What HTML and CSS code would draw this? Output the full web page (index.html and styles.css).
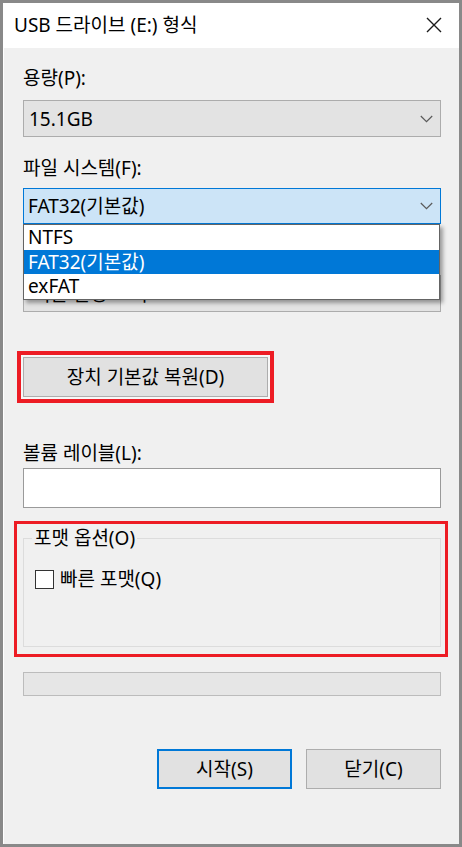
FILE: index.html
```html
<!DOCTYPE html>
<html lang="ko">
<head>
<meta charset="utf-8">
<title>USB 드라이브 (E:) 형식</title>
<link rel="stylesheet" href="styles.css">
</head>
<body>
<div class="window">
  <div class="titlebar">
    <span class="title">USB 드라이브 (E:) 형식</span>
    <svg class="close" width="16" height="16" viewBox="0 0 16 16"><path d="M1 1 L15 15 M15 1 L1 15" stroke="#1a1a1a" stroke-width="1.4" fill="none"/></svg>
  </div>
  <div class="content">
    <div class="label l1">용량(P):</div>
    <div class="combo">
      <span>15.1GB</span>
      <svg class="chev" width="13" height="8" viewBox="0 0 13 8"><path d="M0.8 1 L6.5 6.7 L12.2 1" stroke="#5a5a5a" stroke-width="1.2" fill="none"/></svg>
    </div>
    <div class="label l2">파일 시스템(F):</div>
    <div class="combo-wrap">
      <div class="combo focused">
        <span>FAT32(기본값)</span>
        <svg class="chev" width="13" height="8" viewBox="0 0 13 8"><path d="M0.8 1 L6.5 6.7 L12.2 1" stroke="#5a5a5a" stroke-width="1.2" fill="none"/></svg>
      </div>
      <ul class="dropdown">
        <li>NTFS</li>
        <li class="sel">FAT32(기본값)</li>
        <li>exFAT</li>
      </ul>
    </div>
    <div class="label l3 hidden">할당 단위 크기(A):</div>
    <div class="combo c3">
      <span>기본 할당 크기</span>
    </div>
    <button class="btn restore">장치 기본값 복원(D)</button>
    <div class="label l4">볼륨 레이블(L):</div>
    <div class="textbox"></div>
    <div class="mark">
      <fieldset class="group">
        <legend>포맷 옵션(O)</legend>
        <div class="check-row">
          <span class="checkbox"></span>
          <span class="check-label">빠른 포맷(Q)</span>
        </div>
      </fieldset>
    </div>
    <div class="progress"></div>
    <div class="actions">
      <button class="btn start">시작(S)</button>
      <button class="btn">닫기(C)</button>
    </div>
  </div>
</div>
</body>
</html>
```
FILE: styles.css
```css
html, body {
  margin: 0;
  padding: 0;
}
body {
  font-family: "Noto Sans", "Noto Sans CJK KR", sans-serif;
  font-size: 19px;
  color: #000;
  background: #898989;
}
.window {
  width: 462px;
  height: 847px;
  box-sizing: border-box;
  border: 3px solid #898989;
  background: #f0f0f0;
  box-shadow: inset 1px 0 0 #ffffff;
  overflow: hidden;
}
.titlebar {
  height: 45px;
  background: #ffffff;
  display: flex;
  align-items: center;
  justify-content: space-between;
  padding: 0 17px 0 11px;
}
.title {
  line-height: 24px;
  margin-top: -1px;
}
.close {
  display: block;
  margin-top: -2px;
}
.content {
  padding: 18px 18px 0 20px;
}
.label {
  line-height: 24px;
  height: 24px;
  white-space: nowrap;
}
.hidden {
  visibility: hidden;
}
.l1 { margin-bottom: 10px; }
.l2, .l3 { margin-top: 19px; margin-bottom: 8px; }
.combo {
  height: 37px;
  box-sizing: border-box;
  border: 1px solid #acacac;
  background: #e3e3e3;
  display: flex;
  align-items: center;
  justify-content: space-between;
  padding: 0 7px 0 5px;
  line-height: 24px;
}
.combo.focused {
  height: 36px;
  border-color: #0078d7;
  background: #cce4f7;
  padding-left: 4px;
}
.chev {
  display: block;
}
.combo-wrap {
  position: relative;
}
.dropdown {
  position: absolute;
  left: 0;
  top: 100%;
  width: 417px;
  box-sizing: border-box;
  margin: 0;
  padding: 0;
  list-style: none;
  background: #ffffff;
  border: 1px solid #646464;
  box-shadow: 3px 3px 4px rgba(0, 0, 0, 0.35);
  z-index: 2;
}
.dropdown li {
  height: 24.5px;
  line-height: 24px;
  padding-left: 4px;
}
.dropdown li.sel {
  background: #0078d7;
  color: #ffffff;
}
.c3 {
  padding-left: 9px;
}
.btn {
  font-family: inherit;
  font-size: 19px;
  color: #000;
  background: #e1e1e1;
  border: 1px solid #adadad;
  box-sizing: border-box;
  height: 40px;
  padding: 0;
  line-height: 24px;
}
.restore {
  display: block;
  width: 245px;
  margin-top: 45px;
  outline: 4px solid #ed1c24;
  outline-offset: 2px;
  box-shadow: 0 0 0 2px #f7f7f7;
}
.l4 {
  margin-top: 44px;
  margin-bottom: 3px;
}
.textbox {
  height: 40px;
  box-sizing: border-box;
  background: #ffffff;
  border: 1px solid #9a9a9a;
}
.mark {
  margin: 13px -7px 0 -9px;
  border: 3px solid #ed1c24;
  padding: 2px 4px 7px 6px;
}
.group {
  margin: 0;
  border: 1px solid #dcdcdc;
  padding: 0 8px 55px 8px;
  min-width: 0;
}
.group legend {
  padding: 0 2px;
  line-height: 24px;
}
.check-row {
  display: flex;
  align-items: center;
  margin-top: 17px;
  height: 24px;
  padding-left: 3px;
}
.checkbox {
  width: 19px;
  height: 19px;
  box-sizing: border-box;
  border: 1px solid #333333;
  background: #ffffff;
  margin-right: 6px;
}
.check-label {
  line-height: 24px;
}
.progress {
  margin-top: 15px;
  height: 24px;
  box-sizing: border-box;
  background: #e6e6e6;
  border: 1px solid #bcbcbc;
}
.actions {
  display: flex;
  justify-content: flex-end;
  gap: 14px;
  margin-top: 53px;
}
.actions .btn {
  width: 135px;
}
.btn.start {
  border: 2px solid #0078d7;
}
```
